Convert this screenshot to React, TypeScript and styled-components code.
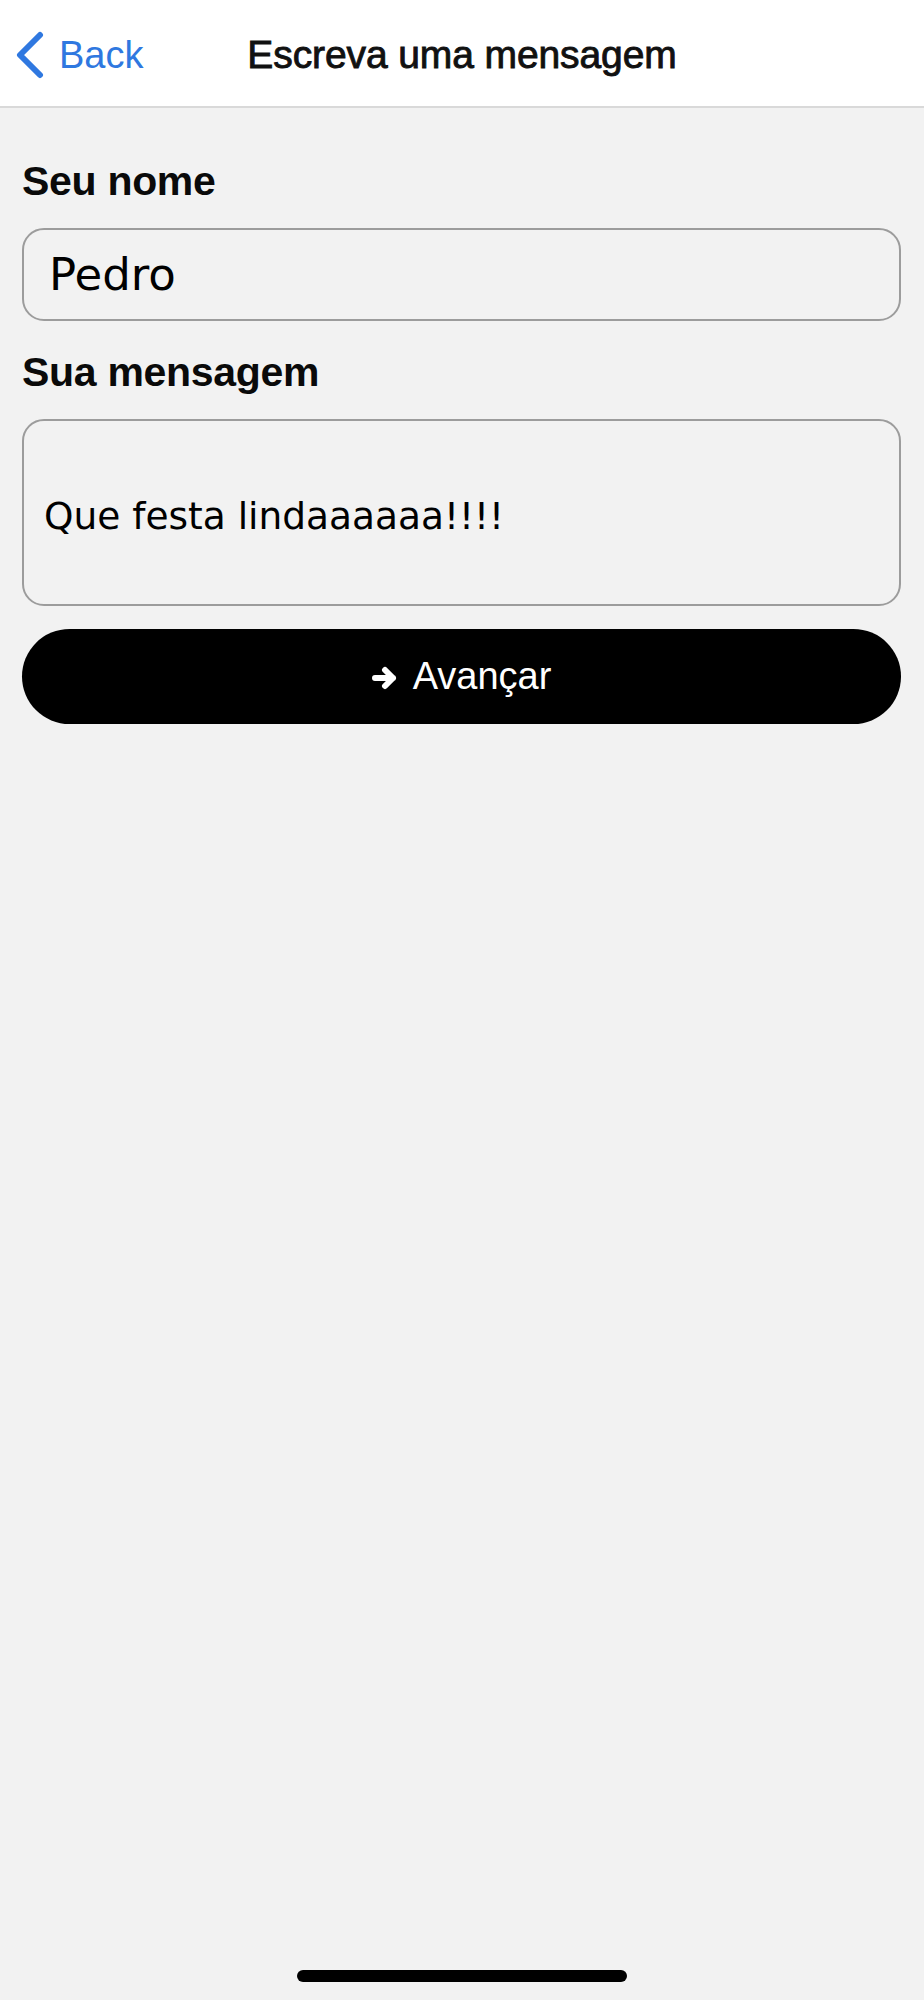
import React from "react";
import styled, { createGlobalStyle } from "styled-components";

const GlobalStyle = createGlobalStyle`
  html, body {
    margin: 0;
    padding: 0;
    background: #f2f2f2;
  }
  * {
    box-sizing: border-box;
  }
`;

export default function App() {
  return (
    <>
      <GlobalStyle />
      <Screen>
        <Header>
          <BackButton type="button">
            <svg width="30" height="48" viewBox="0 0 30 48" fill="none">
              <polyline
                points="25,4 5,24 25,44"
                stroke="#2f78e0"
                strokeWidth="6"
                strokeLinecap="round"
                strokeLinejoin="round"
              />
            </svg>
            <span>Back</span>
          </BackButton>
          <Title>Escreva uma mensagem</Title>
          <div />
        </Header>

        <Form>
          <Label $top={48}>Seu nome</Label>
          <NameInput defaultValue="Pedro" />
          <Label $top={26}>Sua mensagem</Label>
          <MessageInput defaultValue="Que festa lindaaaaaa!!!!" />
          <SubmitButton type="button">
            <svg width="26" height="24" viewBox="0 0 26 24" fill="none">
              <path
                d="M3 12 H21 M13 4 L21 12 L13 20"
                stroke="#fff"
                strokeWidth="6"
                strokeLinecap="round"
                strokeLinejoin="round"
              />
            </svg>
            <span>Avançar</span>
          </SubmitButton>
        </Form>

        <HomeIndicator />
      </Screen>
    </>
  );
}

const Screen = styled.div`
  min-height: 2000px;
  display: flex;
  flex-direction: column;
  background: #f2f2f2;
  font-family: "Liberation Sans", Arial, sans-serif;
`;

const Header = styled.header`
  height: 108px;
  padding-top: 4px;
  background: #fff;
  border-bottom: 2px solid #d9d9d9;
  display: grid;
  grid-template-columns: 1fr auto 1fr;
  align-items: center;
`;

const BackButton = styled.button`
  justify-self: start;
  display: flex;
  align-items: center;
  gap: 14px;
  padding: 0 0 0 15px;
  border: none;
  background: none;
  color: #2f78e0;
  font-family: "Liberation Sans", Arial, sans-serif;
  font-size: 38px;
  cursor: pointer;
`;

const Title = styled.h1`
  margin: 0;
  font-size: 39px;
  font-weight: 400;
  color: #111;
  -webkit-text-stroke: 0.9px #111;
  letter-spacing: -0.1px;
`;

const Form = styled.main`
  display: flex;
  flex-direction: column;
  padding: 0 23px 0 22px;
`;

const Label = styled.label<{ $top: number }>`
  display: block;
  margin: ${(p) => p.$top}px 0 22px;
  font-size: 41px;
  line-height: 50px;
  font-weight: 700;
  color: #0a0a0a;
  letter-spacing: -0.3px;
`;

const fieldBase = `
  width: 100%;
  background: #f2f2f2;
  border: 2px solid #9c9c9c;
  border-radius: 22px;
  color: #000;
  font-family: "DejaVu Sans", sans-serif;
  outline: none;
`;

const NameInput = styled.input`
  ${fieldBase}
  height: 93px;
  padding: 0 24px 0 25px;
  font-size: 45px;
`;

const MessageInput = styled.textarea`
  ${fieldBase}
  display: block;
  height: 187px;
  padding: 73px 20px 0 20px;
  font-size: 37.5px;
  line-height: 44px;
  resize: none;
  overflow: hidden;
`;

const SubmitButton = styled.button`
  margin-top: 23px;
  height: 95px;
  border: none;
  border-radius: 48px;
  background: #000;
  color: #fff;
  display: flex;
  align-items: center;
  justify-content: center;
  gap: 15px;
  font-family: "Liberation Sans", Arial, sans-serif;
  font-size: 38px;
  cursor: pointer;
  svg {
    margin-top: 2px;
  }
`;

const HomeIndicator = styled.div`
  margin: auto auto 18px;
  width: 330px;
  height: 12px;
  border-radius: 6px;
  background: #000;
`;
